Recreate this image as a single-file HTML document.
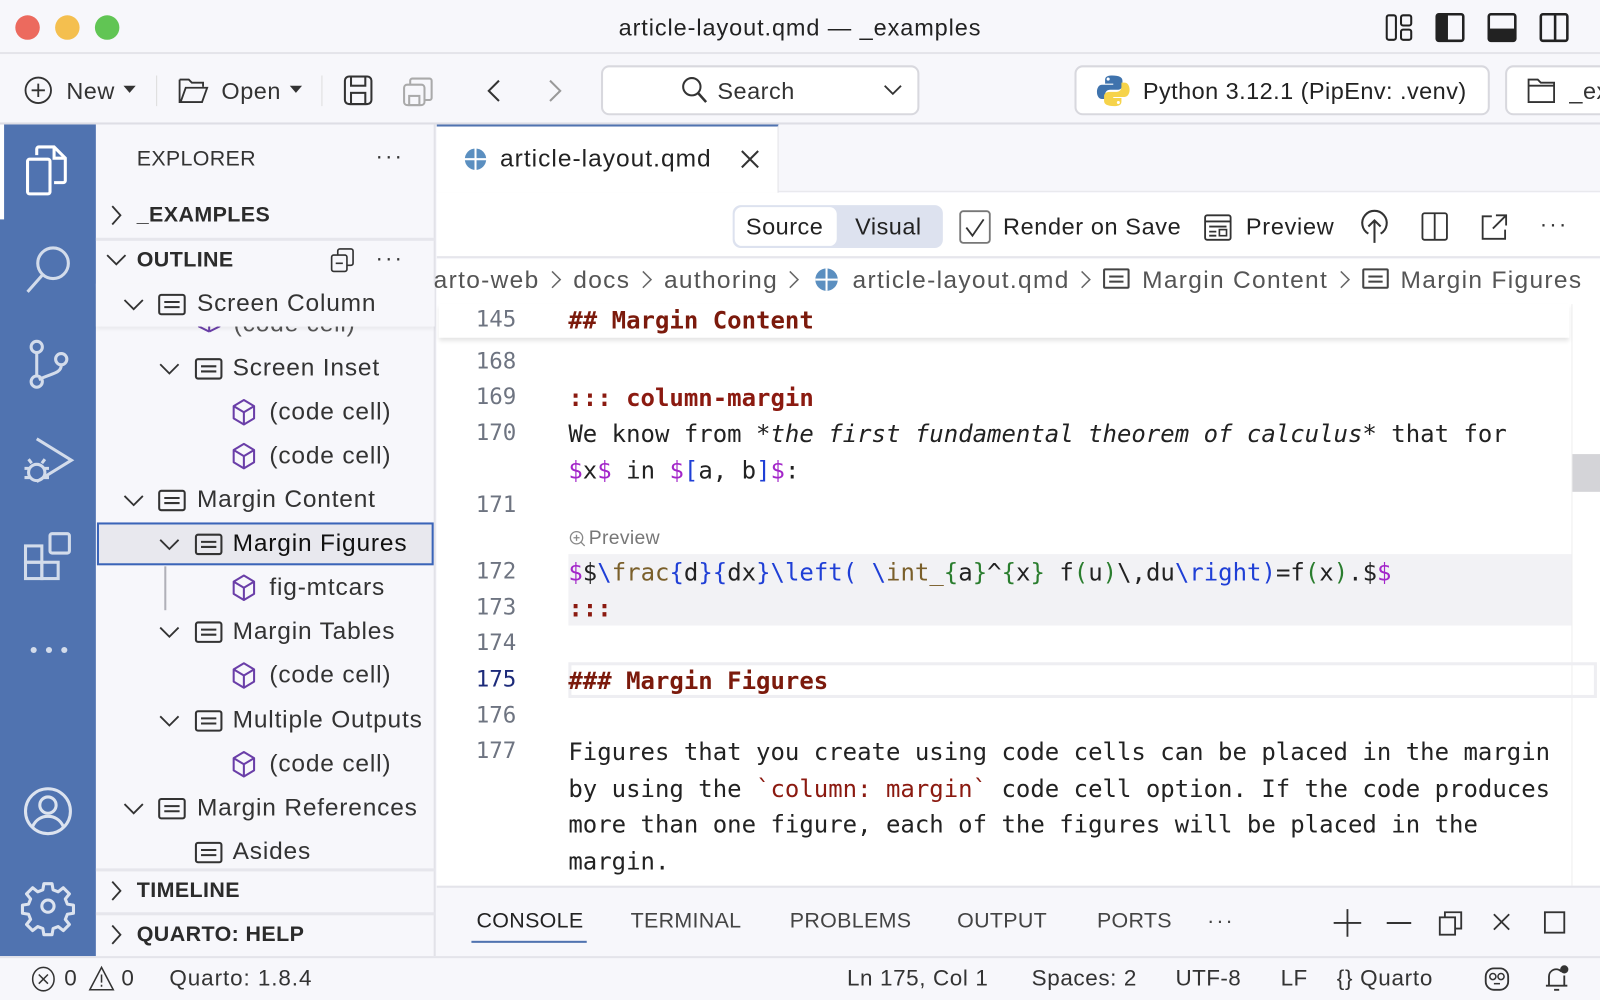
<!DOCTYPE html>
<html><head><meta charset="utf-8"><style>
*{box-sizing:border-box;margin:0;padding:0}
html,body{width:1600px;height:1000px;overflow:hidden;background:#f7f7fb}
#w{position:absolute;left:0;top:0;width:1568px;height:980px;transform:scale(1.020408);transform-origin:0 0;font-family:"Liberation Sans",sans-serif;color:#333;background:#f7f7fb;overflow:hidden}
.a{position:absolute;white-space:nowrap}
.t{position:absolute;white-space:nowrap;line-height:30px;letter-spacing:.5px}
svg{position:absolute;overflow:visible}
.mono{font-family:"DejaVu Sans Mono","Liberation Mono",monospace;font-size:23.5px}
.ln{position:absolute;left:440px;width:66px;text-align:right;color:#6e7481;font-family:"DejaVu Sans Mono",monospace;font-size:22px;line-height:30px}
.cd{position:absolute;left:557px;line-height:30px;white-space:pre}
.h{color:#7b1a0c;font-weight:bold}
.p{color:#a326c9}.b{color:#1f3fd6}.o{color:#7a5f2a}.g{color:#2a7d2e}.r{color:#8b1a10}
.row{position:absolute;font-size:24px;line-height:30px;color:#333;white-space:nowrap;letter-spacing:.8px}
.sec{position:absolute;font-size:21px;font-weight:bold;line-height:30px;color:#2b2b2b;letter-spacing:.4px}
.ptab{position:absolute;top:888px;font-size:21px;line-height:30px;color:#444;letter-spacing:.3px}
.st{position:absolute;top:944px;font-size:22px;line-height:30px;color:#333;letter-spacing:.4px}
.sep{display:inline-block;width:10px;height:18px;margin:0 12px 0 11px;vertical-align:-1px;position:relative}
.bc{display:inline-block;width:26px;height:20px;border:2px solid #444;border-radius:2px;vertical-align:-1px;margin-right:4px;background:linear-gradient(#444,#444) 4px 5px/14px 2px no-repeat,linear-gradient(#444,#444) 4px 10px/14px 2px no-repeat}
</style></head><body><div id="w">

<div class="a" style="left:0;top:0;width:1568px;height:53px;background:#f7f7fb;border-bottom:2px solid #e4e4ea"></div>
<div class="a" style="left:15px;top:15px;width:24px;height:24px;border-radius:50%;background:#ec6a5e"></div>
<div class="a" style="left:54px;top:15px;width:24px;height:24px;border-radius:50%;background:#f4bf4f"></div>
<div class="a" style="left:93px;top:15px;width:24px;height:24px;border-radius:50%;background:#61c554"></div>
<div class="t" style="left:0;width:1568px;text-align:center;top:12px;font-size:23px;color:#222;letter-spacing:.9px">article-layout.qmd — _examples</div>
<svg style="left:1358px;top:14px" width="28" height="26"><rect x="1" y="1" width="9" height="24" rx="2" fill="none" stroke="#222" stroke-width="2"/><rect x="15" y="1" width="10" height="10" rx="2" fill="none" stroke="#222" stroke-width="2"/><rect x="15" y="15" width="10" height="10" rx="2" fill="none" stroke="#222" stroke-width="2"/></svg>
<svg style="left:1407px;top:13px" width="28" height="28"><rect x="1" y="1" width="26" height="26" rx="2" fill="none" stroke="#222" stroke-width="2.5"/><rect x="1" y="1" width="11" height="26" fill="#222"/></svg>
<svg style="left:1458px;top:13px" width="28" height="28"><rect x="1" y="1" width="26" height="26" rx="2" fill="none" stroke="#222" stroke-width="2.5"/><rect x="1" y="15" width="26" height="12" fill="#222"/></svg>
<svg style="left:1509px;top:13px" width="28" height="28"><rect x="1" y="1" width="26" height="26" rx="2" fill="none" stroke="#222" stroke-width="2.5"/><line x1="15" y1="1" x2="15" y2="27" stroke="#222" stroke-width="2.5"/></svg>

<div class="a" style="left:0;top:54px;width:1568px;height:68px;background:#f7f7fb;border-bottom:2px solid #dedee5"></div>
<svg style="left:24px;top:75px" width="27" height="27"><circle cx="13.5" cy="13.5" r="12.5" fill="none" stroke="#333" stroke-width="1.8"/><path d="M13.5 7v13M7 13.5h13" stroke="#333" stroke-width="1.8"/></svg>
<div class="t" style="left:65px;top:74px;font-size:23px">New</div>
<svg style="left:121px;top:84px" width="12" height="8"><path d="M0 0h12L6 7z" fill="#333"/></svg>
<div class="a" style="left:153px;top:74px;width:1px;height:30px;background:#ddd"></div>
<svg style="left:175px;top:76px" width="30" height="26"><path d="M1 2h9l3 3h11v4M1 2v22h22l5-14H7L2 24" fill="none" stroke="#333" stroke-width="1.8"/></svg>
<div class="t" style="left:217px;top:74px;font-size:23px">Open</div>
<svg style="left:284px;top:84px" width="12" height="8"><path d="M0 0h12L6 7z" fill="#333"/></svg>
<div class="a" style="left:315px;top:74px;width:1px;height:30px;background:#ddd"></div>
<svg style="left:337px;top:74px" width="28" height="29"><rect x="1" y="1" width="26" height="27" rx="4" fill="none" stroke="#333" stroke-width="2"/><rect x="7" y="1" width="14" height="9" fill="none" stroke="#333" stroke-width="2"/><rect x="7" y="17" width="14" height="11" fill="none" stroke="#333" stroke-width="2"/></svg>
<svg style="left:395px;top:76px" width="30" height="28"><rect x="1" y="7" width="20" height="20" rx="3" fill="none" stroke="#aaa" stroke-width="2"/><path d="M7 7V3a2 2 0 0 1 2-2h17a2 2 0 0 1 2 2v17a2 2 0 0 1-2 2h-5" fill="none" stroke="#aaa" stroke-width="2"/><rect x="6" y="18" width="10" height="9" fill="none" stroke="#aaa" stroke-width="2"/></svg>
<svg style="left:478px;top:78px" width="12" height="22"><path d="M11 1L1 11l10 10" fill="none" stroke="#333" stroke-width="2"/></svg>
<svg style="left:538px;top:78px" width="12" height="22"><path d="M1 1l10 10L1 21" fill="none" stroke="#999" stroke-width="2"/></svg>
<div class="a" style="left:589px;top:64px;width:312px;height:49px;border:2px solid #d8d8de;border-radius:8px;background:#fff"></div>
<svg style="left:668px;top:75px" width="26" height="27"><circle cx="10" cy="10" r="8.5" fill="none" stroke="#333" stroke-width="2"/><path d="M16 16l8 9" stroke="#333" stroke-width="2.5"/></svg>
<div class="t" style="left:703px;top:74px;font-size:23px">Search</div>
<svg style="left:866px;top:83px" width="18" height="10"><path d="M1 1l8 8 8-8" fill="none" stroke="#333" stroke-width="1.8"/></svg>
<div class="a" style="left:1053px;top:64px;width:407px;height:49px;border:2px solid #d8d8de;border-radius:8px;background:#fff"></div>
<svg style="left:1075px;top:73px" width="32" height="32"><path d="M15 1c-7 0-7 3-7 5v3h8v1H5c-3 0-5 3-5 7s2 7 5 7h3v-4c0-3 2-5 5-5h7c3 0 5-2 5-4V6c0-3-3-5-10-5z" fill="#3f73ad"/><path d="M17 31c7 0 7-3 7-5v-3h-8v-1h11c3 0 5-3 5-7s-2-7-5-7h-3v4c0 3-2 5-5 5h-7c-3 0-5 2-5 4v5c0 3 3 5 10 5z" fill="#f6d34a"/><circle cx="11" cy="4.5" r="1.5" fill="#fff"/><circle cx="21" cy="27.5" r="1.5" fill="#fff"/></svg>
<div class="t" style="left:1120px;top:74px;font-size:23px;color:#222;letter-spacing:.45px">Python 3.12.1 (PipEnv: .venv)</div>
<div class="a" style="left:1475px;top:64px;width:120px;height:49px;border:2px solid #d8d8de;border-radius:8px;background:#fff"></div>
<svg style="left:1497px;top:77px" width="28" height="24"><path d="M1 1h9l3 3h13v19H1z M1 7h25" fill="none" stroke="#333" stroke-width="1.8"/></svg>
<div class="t" style="left:1538px;top:74px;font-size:23px">_ex</div>

<div class="a" style="left:0;top:122px;width:94px;height:816px;background:#5073b0"></div>
<div class="a" style="left:0;top:122px;width:4px;height:93px;background:#fff"></div>
<svg style="left:25px;top:143px" width="44" height="50"><path d="M11 9V3a2 2 0 0 1 2-2h15l11 11v22a2 2 0 0 1-2 2h-9" fill="none" stroke="#fff" stroke-width="3"/><path d="M28 1v11h11" fill="none" stroke="#fff" stroke-width="3"/><rect x="2" y="13" width="22" height="34" rx="2" fill="none" stroke="#fff" stroke-width="3"/></svg>
<svg style="left:24px;top:238px" width="48" height="50" opacity=".75"><circle cx="28" cy="20" r="15" fill="none" stroke="#fff" stroke-width="3"/><path d="M18 31L3 48" stroke="#fff" stroke-width="3"/></svg>
<svg style="left:28px;top:332px" width="40" height="50" opacity=".75"><circle cx="8" cy="8" r="5.5" fill="none" stroke="#fff" stroke-width="3"/><circle cx="8" cy="42" r="5.5" fill="none" stroke="#fff" stroke-width="3"/><circle cx="32" cy="20" r="5.5" fill="none" stroke="#fff" stroke-width="3"/><path d="M8 14v22M32 26c0 8-10 8-22 14" fill="none" stroke="#fff" stroke-width="3"/></svg>
<svg style="left:22px;top:427px" width="50" height="50" opacity=".75"><path d="M14 3l34 21-34 21" fill="none" stroke="#fff" stroke-width="3"/><circle cx="14" cy="36" r="8" fill="none" stroke="#fff" stroke-width="3"/><path d="M2 32h5M2 41h5M21 32h5M21 41h5M9 27l-3-4M19 27l3-4" stroke="#fff" stroke-width="3"/></svg>
<svg style="left:23px;top:521px" width="50" height="50" opacity=".75"><rect x="2" y="14" width="16" height="16" fill="none" stroke="#fff" stroke-width="3"/><rect x="2" y="30" width="16" height="16" fill="none" stroke="#fff" stroke-width="3"/><rect x="18" y="30" width="16" height="16" fill="none" stroke="#fff" stroke-width="3"/><rect x="26" y="2" width="19" height="19" rx="2" fill="none" stroke="#fff" stroke-width="3"/></svg>
<svg style="left:29px;top:633px" width="40" height="8" opacity=".75"><circle cx="4" cy="4" r="3" fill="#fff"/><circle cx="19" cy="4" r="3" fill="#fff"/><circle cx="34" cy="4" r="3" fill="#fff"/></svg>
<svg style="left:23px;top:771px" width="48" height="48" opacity=".8"><circle cx="24" cy="24" r="22" fill="none" stroke="#fff" stroke-width="3"/><circle cx="24" cy="18" r="8" fill="none" stroke="#fff" stroke-width="3"/><path d="M9 39c3-7 9-10 15-10s12 3 15 10" fill="none" stroke="#fff" stroke-width="3"/></svg>
<svg style="left:23px;top:864px" width="48" height="48" opacity=".8"><path d="M20 2h8l1 6 5 2 5-4 6 6-4 5 2 5 6 1v8l-6 1-2 5 4 5-6 6-5-4-5 2-1 6h-8l-1-6-5-2-5 4-6-6 4-5-2-5-6-1v-8l6-1 2-5-4-5 6-6 5 4 5-2z" fill="none" stroke="#fff" stroke-width="3" stroke-linejoin="round"/><circle cx="24" cy="24" r="6" fill="none" stroke="#fff" stroke-width="3"/></svg>

<div class="a" style="left:94px;top:122px;width:333px;height:816px;background:#f7f7fb;border-right:2px solid #e2e2e8"></div>
<div class="t" style="left:134px;top:141px;font-size:21px;color:#333;letter-spacing:.3px">EXPLORER</div>
<div class="t" style="left:368px;top:138px;font-size:22px;letter-spacing:2px">···</div>
<svg style="left:108px;top:201px" width="12" height="20"><path d="M2 1l8 9-8 9" fill="none" stroke="#333" stroke-width="1.8"/></svg>
<div class="sec" style="left:134px;top:196px">_EXAMPLES</div>
<div class="a" style="left:94px;top:233px;width:332px;height:3px;background:#e6e6ec"></div>
<svg style="left:104px;top:249px" width="20" height="12"><path d="M1 1l9 9 9-9" fill="none" stroke="#333" stroke-width="1.8"/></svg>
<div class="sec" style="left:134px;top:240px">OUTLINE</div>
<svg style="left:324px;top:243px" width="24" height="24"><rect x="1" y="7" width="15" height="16" rx="2" fill="none" stroke="#333" stroke-width="1.6"/><path d="M7 7V3a2 2 0 0 1 2-2h11a2 2 0 0 1 2 2v12a2 2 0 0 1-2 2h-4M5 15h7" fill="none" stroke="#333" stroke-width="1.6"/></svg>
<div class="t" style="left:368px;top:238px;font-size:22px;letter-spacing:2px">···</div>

<div class="row" style="left:229px;top:303px;color:#555">(code cell)</div>
<svg style="left:193px;top:309px" width="24" height="18"><path d="M12 16l10-5V0M12 16L2 11V0M12 16V6" fill="none" stroke="#6a3ea8" stroke-width="2"/></svg>
<div class="a" style="left:94px;top:278px;width:332px;height:42px;background:#f7f7fb;box-shadow:0 3px 4px rgba(0,0,0,.06)"></div>

<div class="a" style="left:95px;top:512px;width:330px;height:42px;background:#e8e8ee;border:2px solid #3a64b8"></div>
<div class="a" style="left:161px;top:555px;width:2px;height:43px;background:#b0b0b8"></div>

<div id="rows"></div>
<div class="a" style="left:94px;top:851px;width:332px;height:3px;background:#e6e6ec"></div>
<svg style="left:108px;top:863px" width="12" height="20"><path d="M2 1l8 9-8 9" fill="none" stroke="#333" stroke-width="1.8"/></svg>
<div class="sec" style="left:134px;top:858px">TIMELINE</div>
<div class="a" style="left:94px;top:894px;width:332px;height:3px;background:#e6e6ec"></div>
<svg style="left:108px;top:906px" width="12" height="20"><path d="M2 1l8 9-8 9" fill="none" stroke="#333" stroke-width="1.8"/></svg>
<div class="sec" style="left:134px;top:901px">QUARTO: HELP</div>

<div class="a" style="left:428px;top:122px;width:1140px;height:66px;background:#f7f7fb;border-bottom:1px solid #e6e6ec"></div>
<div class="a" style="left:428px;top:122px;width:335px;height:67px;background:#fff;border-top:2px solid #5073b0;border-right:1px solid #e2e2e8"></div>
<svg style="left:455px;top:145px" width="22" height="22"><circle cx="11" cy="11" r="10.5" fill="#5b8fc0"/><path d="M11 0v22M0 11h22" stroke="#fff" stroke-width="2"/></svg>
<div class="t" style="left:490px;top:141px;font-size:24px;color:#222;letter-spacing:1px">article-layout.qmd</div>
<svg style="left:726px;top:147px" width="18" height="18"><path d="M1 1l16 16M17 1L1 17" stroke="#333" stroke-width="2"/></svg>

<div class="a" style="left:428px;top:189px;width:1140px;height:64px;background:#fff;border-bottom:2px solid #e6e6ec"></div>
<div class="a" style="left:718px;top:201px;width:206px;height:42px;background:#dde2ef;border-radius:8px"></div>
<div class="a" style="left:720px;top:203px;width:100px;height:38px;background:#fff;border-radius:7px"></div>
<div class="t" style="left:731px;top:207px;font-size:23px;color:#222">Source</div>
<div class="t" style="left:838px;top:207px;font-size:23px;color:#222">Visual</div>
<svg style="left:940px;top:206px" width="31" height="33"><rect x="1" y="1" width="29" height="31" rx="3" fill="none" stroke="#777" stroke-width="1.8"/><path d="M7 17l6 8 11-16" fill="none" stroke="#333" stroke-width="1.8"/></svg>
<div class="t" style="left:983px;top:207px;font-size:23px;color:#222;letter-spacing:.6px">Render on Save</div>
<svg style="left:1180px;top:210px" width="27" height="26"><rect x="1" y="1" width="25" height="24" rx="2" fill="none" stroke="#333" stroke-width="1.8"/><path d="M1 7h25M5 12h17M5 17h7M5 21h7" stroke="#333" stroke-width="1.8"/><rect x="15" y="15" width="7" height="6" fill="none" stroke="#333" stroke-width="1.6"/></svg>
<div class="t" style="left:1221px;top:207px;font-size:23px;color:#222;letter-spacing:.7px">Preview</div>
<svg style="left:1333px;top:205px" width="28" height="34"><path d="M8 24a12 12 0 1 1 12 0" fill="none" stroke="#333" stroke-width="2"/><path d="M14 33V11M8 17l6-6 6 6" fill="none" stroke="#333" stroke-width="2"/></svg>
<svg style="left:1393px;top:208px" width="26" height="28"><rect x="1" y="1" width="24" height="26" rx="2" fill="none" stroke="#333" stroke-width="1.8"/><line x1="13" y1="1" x2="13" y2="27" stroke="#333" stroke-width="1.8"/></svg>
<svg style="left:1451px;top:209px" width="27" height="26"><path d="M11 3H2v22h22v-9M15 2h10v10M25 2L12 15" fill="none" stroke="#333" stroke-width="1.8"/></svg>
<div class="t" style="left:1509px;top:205px;font-size:22px;letter-spacing:2px">···</div>

<div class="a" style="left:428px;top:254px;width:1140px;height:614px;background:#fff"></div>
<div class="t" style="left:425px;top:260px;font-size:24px;color:#555;letter-spacing:1.3px">arto-web<span class="sep"><svg width="10" height="18"><path d="M1 1l8 8-8 8" fill="none" stroke="#666" stroke-width="1.5"/></svg></span>docs<span class="sep"><svg width="10" height="18"><path d="M1 1l8 8-8 8" fill="none" stroke="#666" stroke-width="1.5"/></svg></span>authoring<span class="sep"><svg width="10" height="18"><path d="M1 1l8 8-8 8" fill="none" stroke="#666" stroke-width="1.5"/></svg></span><span style="display:inline-block;width:22px;height:22px;border-radius:50%;background:#5b8fc0;vertical-align:-3px;position:relative;margin:0 14px 0 4px"><span style="position:absolute;left:10px;top:0;width:2px;height:22px;background:#fff"></span><span style="position:absolute;left:0;top:10px;width:22px;height:2px;background:#fff"></span></span>article-layout.qmd<span class="sep"><svg width="10" height="18"><path d="M1 1l8 8-8 8" fill="none" stroke="#666" stroke-width="1.5"/></svg></span><span class="bc"></span> Margin Content<span class="sep"><svg width="10" height="18"><path d="M1 1l8 8-8 8" fill="none" stroke="#666" stroke-width="1.5"/></svg></span><span class="bc"></span> Margin Figures</div>

<div class="a" style="left:1540px;top:298px;width:1px;height:570px;background:#eee"></div>
<div class="a" style="left:1541px;top:445px;width:27px;height:37px;background:#d4d4d8"></div>
<div class="a" style="left:557px;top:543px;width:983px;height:70px;background:#f2f2f5"></div>
<div class="a" style="left:557px;top:649px;width:1008px;height:35px;border:3px solid #eeeef2"></div>

<div class="ln" style="top:340px">168</div>
<div class="ln" style="top:375px">169</div><div class="cd mono r" style="top:375px;font-weight:bold">::: column-margin</div>
<div class="ln" style="top:410px">170</div><div class="cd mono" style="top:410px;color:#222">We know from <i>*the first fundamental theorem of calculus*</i> that for</div>
<div class="cd mono" style="top:446px;color:#222"><span class="p">$</span>x<span class="p">$</span> in <span class="p">$</span><span class="b">[</span>a, b<span class="b">]</span><span class="p">$</span>:</div>
<div class="ln" style="top:481px">171</div>
<svg style="left:558px;top:520px" width="16" height="16"><circle cx="7" cy="7" r="6" fill="none" stroke="#888" stroke-width="1.3"/><path d="M4 7h6M7 4v6M11 11l4 4" stroke="#888" stroke-width="1.3"/></svg>
<div class="t" style="left:577px;top:513px;font-size:19px;color:#777;letter-spacing:.3px">Preview</div>
<div class="ln" style="top:546px">172</div><div class="cd mono" style="top:546px;color:#222"><span class="p">$</span>$<span class="b">\</span><span class="o">frac</span><span class="b">{</span>d<span class="b">}{</span>dx<span class="b">}\left(</span> <span class="b">\</span><span class="o">int_</span><span class="g">{</span>a<span class="g">}</span>^<span class="g">{</span>x<span class="g">}</span> f<span class="g">(</span>u<span class="g">)</span>\,du<span class="b">\right)</span>=f<span class="g">(</span>x<span class="g">)</span>.$<span class="p">$</span></div>
<div class="ln" style="top:581px">173</div><div class="cd mono r" style="top:581px;font-weight:bold">:::</div>
<div class="ln" style="top:616px">174</div>
<div class="ln" style="top:652px;color:#1d2b7a">175</div><div class="cd mono h" style="top:652px">### Margin Figures</div>
<div class="ln" style="top:687px">176</div>
<div class="ln" style="top:722px">177</div>
<div class="cd mono" style="top:722px;color:#222">Figures that you create using code cells can be placed in the margin</div>
<div class="cd mono" style="top:758px;color:#222">by using the <span class="r">`column: margin`</span> code cell option. If the code produces</div>
<div class="cd mono" style="top:793px;color:#222">more than one figure, each of the figures will be placed in the</div>
<div class="cd mono" style="top:829px;color:#222">margin.</div>

<div class="a" style="left:430px;top:298px;width:1108px;height:33px;background:#fff;box-shadow:0 3px 4px rgba(0,0,0,.1)"></div>
<div class="ln" style="top:299px">145</div><div class="cd mono h" style="top:299px">## Margin Content</div>

<div class="a" style="left:428px;top:868px;width:1140px;height:70px;background:#f7f7fb;border-top:2px solid #e4e4ea"></div>
<div class="ptab" style="left:467px;color:#222">CONSOLE</div>
<div class="a" style="left:462px;top:922px;width:113px;height:2px;background:#5073b0"></div>
<div class="ptab" style="left:618px">TERMINAL</div>
<div class="ptab" style="left:774px">PROBLEMS</div>
<div class="ptab" style="left:938px">OUTPUT</div>
<div class="ptab" style="left:1075px">PORTS</div>
<div class="ptab" style="left:1183px;letter-spacing:2px">···</div>
<svg style="left:1307px;top:891px" width="27" height="27"><path d="M13.5 0v27M0 13.5h27" stroke="#333" stroke-width="1.8"/></svg>
<svg style="left:1359px;top:903px" width="24" height="3"><path d="M0 1.5h24" stroke="#333" stroke-width="2"/></svg>
<svg style="left:1410px;top:893px" width="23" height="24"><rect x="1" y="6" width="15" height="17" fill="none" stroke="#333" stroke-width="1.8"/><path d="M6 6V1h16v16h-6" fill="none" stroke="#333" stroke-width="1.8"/></svg>
<svg style="left:1463px;top:895px" width="17" height="17"><path d="M1 1l15 15M16 1L1 16" stroke="#333" stroke-width="1.8"/></svg>
<svg style="left:1513px;top:893px" width="21" height="22"><rect x="1" y="1" width="19" height="20" fill="none" stroke="#333" stroke-width="1.8"/></svg>

<div class="a" style="left:0;top:937px;width:1568px;height:43px;background:#f7f7fb;border-top:2px solid #e4e4ea"></div>
<svg style="left:31px;top:947px" width="23" height="25"><ellipse cx="11.5" cy="12.5" rx="10.5" ry="11.5" fill="none" stroke="#333" stroke-width="1.5"/><path d="M7 8l9 9M16 8l-9 9" stroke="#333" stroke-width="1.5"/></svg>
<div class="st" style="left:63px">0</div>
<svg style="left:87px;top:947px" width="25" height="24"><path d="M12.5 1L24 23H1z" fill="none" stroke="#333" stroke-width="1.5"/><path d="M12.5 8v8M12.5 18v2" stroke="#333" stroke-width="1.5"/></svg>
<div class="st" style="left:119px">0</div>
<div class="st" style="left:166px;letter-spacing:.9px">Quarto: 1.8.4</div>
<div class="st" style="left:830px;letter-spacing:.6px">Ln 175, Col 1</div>
<div class="st" style="left:1011px;letter-spacing:.6px">Spaces: 2</div>
<div class="st" style="left:1152px">UTF-8</div>
<div class="st" style="left:1255px">LF</div>
<div class="st" style="left:1310px;letter-spacing:.7px">{}&nbsp;Quarto</div>
<svg style="left:1454px;top:946px" width="26" height="26"><rect x="2" y="3" width="22" height="21" rx="8" fill="none" stroke="#333" stroke-width="1.8"/><circle cx="9" cy="11" r="3" fill="none" stroke="#333" stroke-width="1.5"/><circle cx="17" cy="11" r="3" fill="none" stroke="#333" stroke-width="1.5"/><path d="M10 18h6" stroke="#333" stroke-width="1.5"/></svg>
<svg style="left:1513px;top:945px" width="26" height="28"><path d="M5 21V12a7 7 0 0 1 12-5M20 11v10M2 21h21M10 25h5" fill="none" stroke="#333" stroke-width="1.8"/><circle cx="20" cy="5" r="4" fill="#333"/></svg>

<script>
var R=[[131,168,193,298,'h','Screen Column',1],
[166,204,228,361,'h','Screen Inset'],[0,239,264,404,'c','(code cell)'],[0,239,264,447,'c','(code cell)'],
[131,168,193,490,'h','Margin Content'],[166,204,228,533,'h','Margin Figures'],[0,239,264,576,'c','fig-mtcars'],
[166,204,228,619,'h','Margin Tables'],[0,239,264,662,'c','(code cell)'],[166,204,228,706,'h','Multiple Outputs'],
[0,239,264,749,'c','(code cell)'],[131,168,193,792,'h','Margin References'],[0,204,228,835,'h','Asides']];
var s='';
R.forEach(function(r){var y=r[3];var z=r[6]?'z-index:2;':'';
if(r[0])s+='<svg style="'+z+'left:'+(r[0]-10)+'px;top:'+(y-5)+'px" width="20" height="11"><path d="M1 1l9 9 9-9" fill="none" stroke="#333" stroke-width="1.8"/></svg>';
if(r[4]=='h')s+='<svg style="'+z+'left:'+(r[1]-13)+'px;top:'+(y-10)+'px" width="27" height="21"><rect x="1" y="1" width="25" height="19" rx="2" fill="none" stroke="#333" stroke-width="2"/><path d="M6 8h15M6 13h15" stroke="#333" stroke-width="2"/></svg>';
else s+='<svg style="left:'+(r[1]-12)+'px;top:'+(y-13)+'px" width="24" height="26"><path d="M12 1l10 6v12l-10 6L2 19V7zM2 7l10 6 10-6M12 13v12" fill="none" stroke="#6a3ea8" stroke-width="2" stroke-linejoin="round"/></svg>';
s+='<div class="row" style="'+z+'left:'+r[2]+'px;top:'+(y-15)+'px;'+(r[5]=='Margin Figures'?'color:#111':'')+'">'+r[5]+'</div>';});
document.getElementById('rows').innerHTML=s;
</script>
</div></body></html>
